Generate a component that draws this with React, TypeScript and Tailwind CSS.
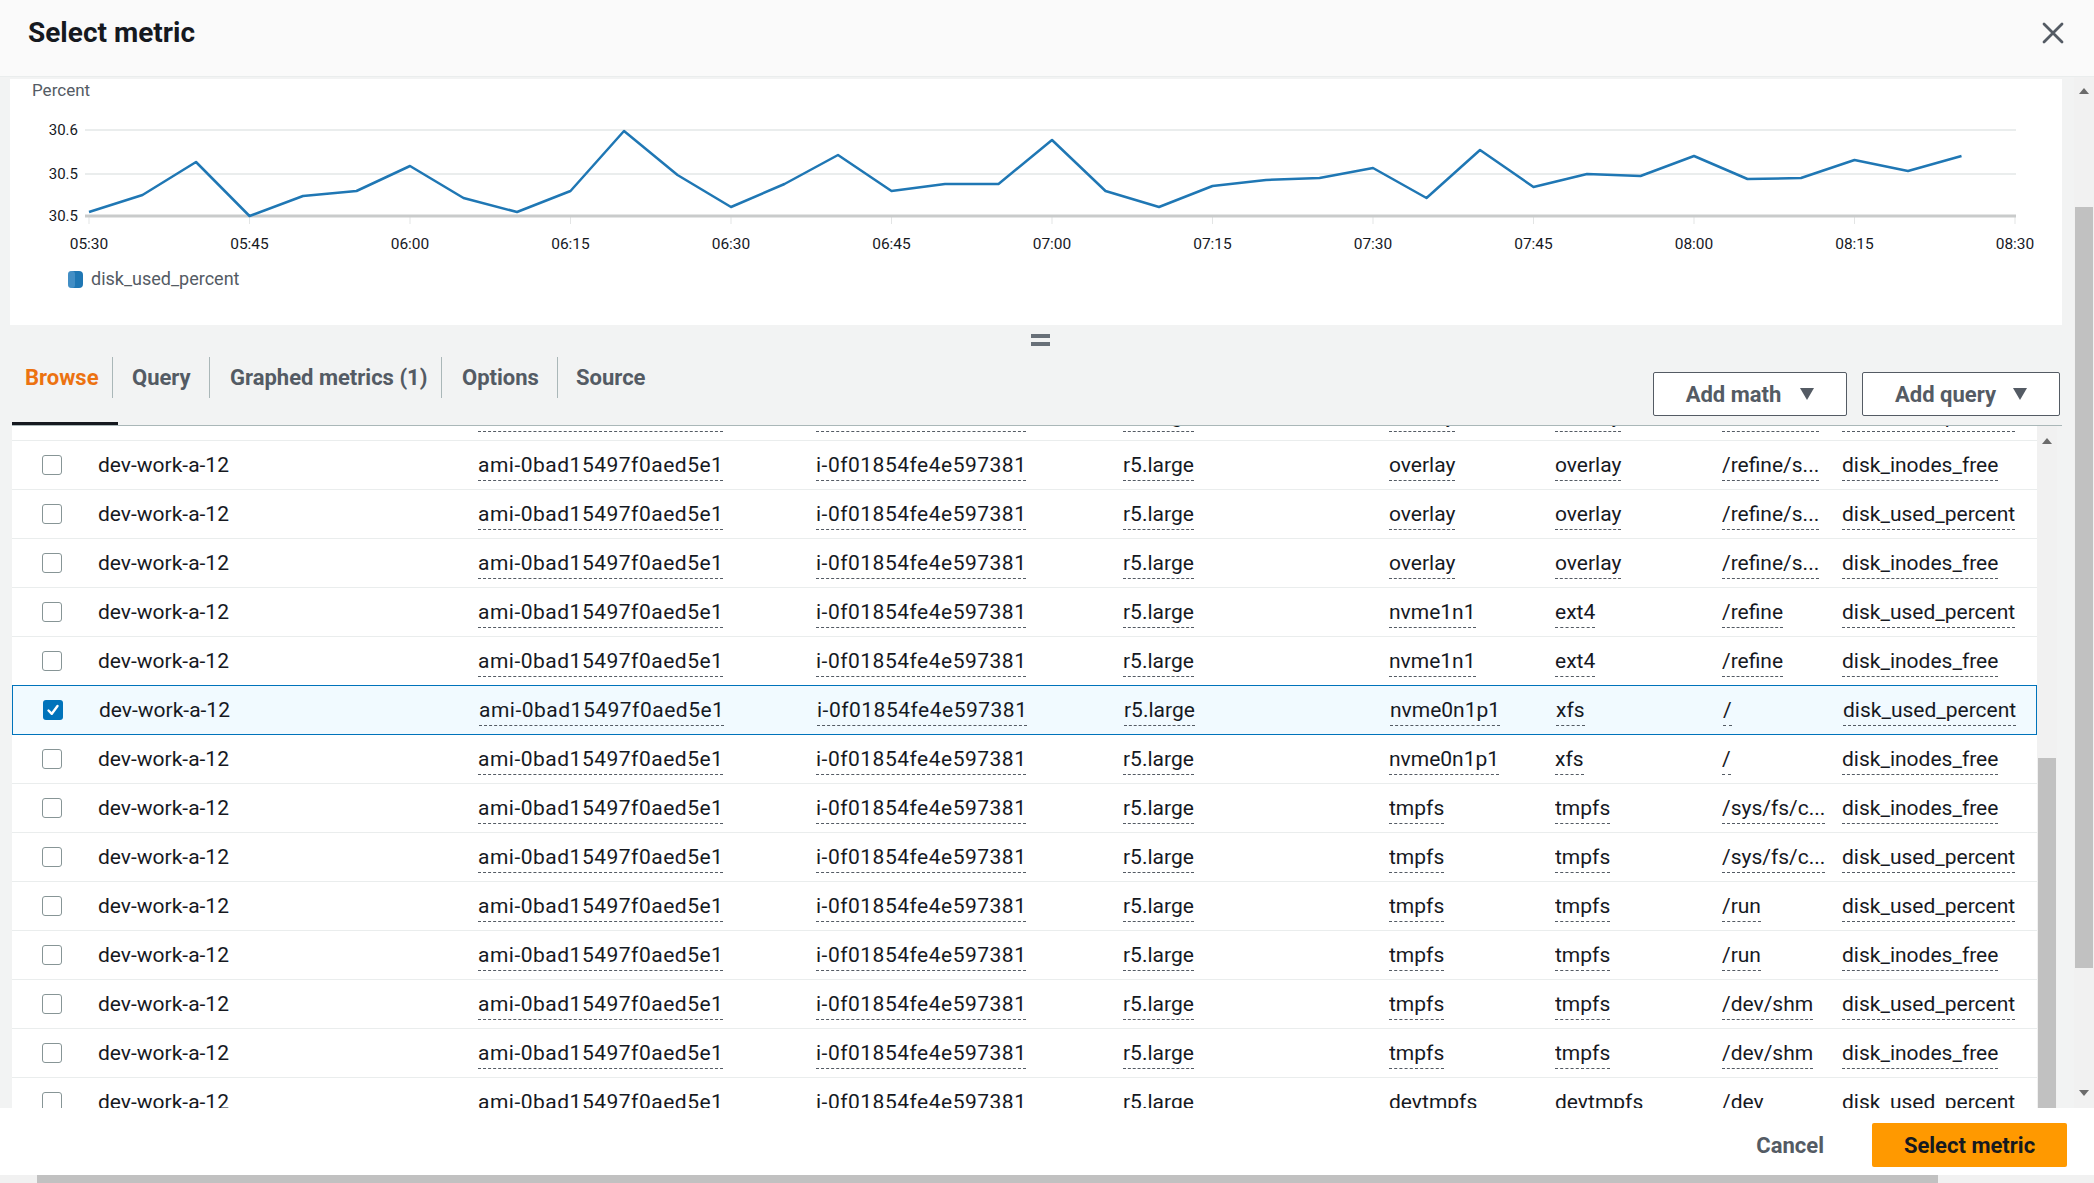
import React from 'react';

type Row = [string, string, string, string];

const ROWS: Row[] = [
  ['overlay', 'overlay', '/refine/s...', 'disk_used_percent'],
  ['overlay', 'overlay', '/refine/s...', 'disk_inodes_free'],
  ['overlay', 'overlay', '/refine/s...', 'disk_used_percent'],
  ['overlay', 'overlay', '/refine/s...', 'disk_inodes_free'],
  ['nvme1n1', 'ext4', '/refine', 'disk_used_percent'],
  ['nvme1n1', 'ext4', '/refine', 'disk_inodes_free'],
  ['nvme0n1p1', 'xfs', '/', 'disk_used_percent'],
  ['nvme0n1p1', 'xfs', '/', 'disk_inodes_free'],
  ['tmpfs', 'tmpfs', '/sys/fs/c...', 'disk_inodes_free'],
  ['tmpfs', 'tmpfs', '/sys/fs/c...', 'disk_used_percent'],
  ['tmpfs', 'tmpfs', '/run', 'disk_used_percent'],
  ['tmpfs', 'tmpfs', '/run', 'disk_inodes_free'],
  ['tmpfs', 'tmpfs', '/dev/shm', 'disk_used_percent'],
  ['tmpfs', 'tmpfs', '/dev/shm', 'disk_inodes_free'],
  ['devtmpfs', 'devtmpfs', '/dev', 'disk_used_percent'],
];

const SELECTED = 6;

// y positions of the datapoints, one every 5 minutes from 05:30
const POINTS = [
  212, 195, 162, 216, 196, 191, 166, 198, 212, 191, 131, 175, 207, 184, 155, 191, 184, 184,
  140, 191, 207, 186, 180, 178, 168, 198, 150, 187, 174, 176, 156, 179, 178, 160, 171, 156,
];

const TICKS = ['05:30', '05:45', '06:00', '06:15', '06:30', '06:45', '07:00', '07:15', '07:30', '07:45', '08:00', '08:15', '08:30'];

const X0 = 89;
const X1 = 2015;
const STEP = (X1 - X0) / 36;

const Chart: React.FC = () => {
  const line = POINTS.map((y, i) => `${(X0 + i * STEP).toFixed(1)},${y}`).join(' ');
  return (
    <svg width={2052} height={246} viewBox="10 79 2052 246" className="block">
      <text x={32} y={96} fontSize={17} fill="#545b64">Percent</text>
      {[
        { y: 130, label: '30.6' },
        { y: 174, label: '30.5' },
        { y: 216, label: '30.5' },
      ].map(g => (
        <text key={g.y} x={78} y={g.y + 5} fontSize={15} fill="#16191f" textAnchor="end">{g.label}</text>
      ))}
      <line x1={85} x2={2016} y1={130} y2={130} stroke="#eaeded" strokeWidth={2} />
      <line x1={85} x2={2016} y1={174} y2={174} stroke="#eaeded" strokeWidth={2} />
      {TICKS.map((t, i) => {
        const x = X0 + i * STEP * 3;
        return (
          <g key={t}>
            <line x1={x} x2={x} y1={217} y2={224} stroke="#e3e5e5" strokeWidth={1} />
            <text x={x} y={249} fontSize={15.5} fill="#16191f" textAnchor="middle">{t}</text>
          </g>
        );
      })}
      <line x1={85} x2={2016} y1={216} y2={216} stroke="#c9cbcb" strokeWidth={3} />
      <polyline points={line} fill="none" stroke="#1f77b4" strokeWidth={2.5} strokeLinejoin="round" />
      <rect x={68} y={271} width={15} height={17} rx={4} fill="#1f77b4" />
      <rect x={68} y={271} width={7} height={17} rx={3} fill="#5a9fd0" opacity={0.6} />
      <text x={91} y={285} fontSize={18} fill="#545b64">disk_used_percent</text>
    </svg>
  );
};

const Caret: React.FC = () => (
  <svg width={14} height={12} viewBox="0 0 14 12" className="shrink-0">
    <polygon points="0,0 14,0 7,12" fill="#545b64" />
  </svg>
);

const Checkbox: React.FC<{ checked?: boolean }> = ({ checked }) =>
  checked ? (
    <div className="w-[20px] h-[20px] rounded-[3px] bg-[#0073bb] flex items-center justify-center">
      <svg width={14} height={14} viewBox="0 0 14 14">
        <path d="M2.5 7.5 L5.8 10.8 L11.5 3" fill="none" stroke="white" strokeWidth={2.4} strokeLinecap="round" strokeLinejoin="round" />
      </svg>
    </div>
  ) : (
    <div className="w-[20px] h-[20px] rounded-[3px] border-[1.5px] border-[#879596] bg-white" />
  );

const Cell: React.FC<{ text: string; dashed?: boolean; wide?: boolean }> = ({ text, dashed = true, wide }) => (
  <div className="flex items-center overflow-hidden whitespace-nowrap">
    <span
      className={`inline-block pt-[4px] pb-[3px] leading-[24px] border-b border-dashed ${dashed ? 'border-[#545b64]' : 'border-transparent'} ${wide ? 'tracking-[0.5px]' : ''}`}
    >
      {text}
    </span>
  </div>
);

const tabs = [
  { label: 'Browse', w: 'w-[101px]', pl: 'pl-[13px]', active: true, divider: true },
  { label: 'Query', w: 'w-[97px]', pl: 'pl-[19px]', divider: true },
  { label: 'Graphed metrics (1)', w: 'w-[232px]', pl: 'pl-[20px]', divider: true },
  { label: 'Options', w: 'w-[116px]', pl: 'pl-[20px]', divider: true },
  { label: 'Source', w: 'w-[110px]', pl: 'pl-[18px]', divider: false },
];

export default function App() {
  return (
    <div className="w-[2094px] h-[1183px] overflow-hidden flex flex-col bg-white font-['Roboto','Liberation_Sans',sans-serif] text-[#16191f]">
      {/* Header */}
      <div className="h-[77px] shrink-0 bg-[#fafafa] border-b border-[#eaeded] flex items-center justify-between pl-[28px] pr-[30px] pb-[10px]">
        <h2 className="text-[28px] font-bold leading-none text-[#16191f]">Select metric</h2>
        <svg width={22} height={22} viewBox="0 0 22 22">
          <path d="M2 2 L20 20 M20 2 L2 20" stroke="#545b64" strokeWidth={2.8} strokeLinecap="round" />
        </svg>
      </div>

      {/* Body */}
      <div className="h-[1031px] shrink-0 flex">
        <div className="w-[2074px] bg-[#f2f3f3] flex flex-col">
          <div className="mt-[2px] ml-[10px] w-[2052px] h-[246px] bg-white">
            <Chart />
          </div>

          {/* drag handle */}
          <div className="pt-[8px] h-[21px] flex justify-center pl-[6px]">
            <div className="flex flex-col gap-[4px] pt-[1px]">
              <div className="w-[19px] h-[4px] bg-[#687078]" />
              <div className="w-[19px] h-[4px] bg-[#687078]" />
            </div>
          </div>

          {/* Tabs */}
          <div className="ml-[12px] w-[2050px] h-[80px] border-b border-[#aab7b8] flex justify-between">
            <div className="flex flex-col">
              <div className="mt-[11px] h-[41px] flex">
                {tabs.map(t => (
                  <div
                    key={t.label}
                    className={`${t.w} ${t.pl} h-full flex items-center text-[22px] font-bold whitespace-nowrap ${t.divider ? 'border-r border-[#aab7b8]' : ''} ${t.active ? 'text-[#ec7211]' : 'text-[#545b64]'}`}
                  >
                    {t.label}
                  </div>
                ))}
              </div>
              <div className="flex-1" />
              <div className="w-[106px] h-[3px] bg-[#16191f]" />
            </div>
            <div className="self-end mb-[9px] flex gap-[15px] mr-[2px]">
              <button className="w-[194px] h-[44px] bg-white border border-[#545b64] rounded-[2px] flex items-center justify-center gap-[19px] text-[22px] font-bold text-[#545b64]">
                <span>Add math</span>
                <Caret />
              </button>
              <button className="w-[198px] h-[44px] bg-white border border-[#545b64] rounded-[2px] flex items-center justify-center gap-[17px] text-[22px] font-bold text-[#545b64]">
                <span>Add query</span>
                <Caret />
              </button>
            </div>
          </div>

          {/* Table */}
          <div className="ml-[12px] flex h-[682px]">
            <div className="w-[2025px] h-full bg-white overflow-hidden">
              <div className="-mt-[34px]">
                {ROWS.map((r, i) => {
                  const sel = i === SELECTED;
                  const before = i === SELECTED - 1;
                  return (
                    <div
                      key={i}
                      className={`h-[49px] grid grid-cols-[86px_380px_338px_307px_266px_166px_167px_120px_195px] text-[21px] border-b ${
                        sel ? 'bg-[#f1faff] border-[#0073bb] border-x' : before ? 'border-[#0073bb]' : 'border-[#eaeded]'
                      }`}
                    >
                      <div className="flex items-center pl-[30px]">
                        <Checkbox checked={sel} />
                      </div>
                      <Cell text="dev-work-a-12" dashed={false} />
                      <Cell text="ami-0bad15497f0aed5e1" wide />
                      <Cell text="i-0f01854fe4e597381" wide />
                      <Cell text="r5.large" />
                      <Cell text={r[0]} />
                      <Cell text={r[1]} />
                      <Cell text={r[2]} />
                      <Cell text={r[3]} />
                    </div>
                  );
                })}
              </div>
            </div>
            {/* inner scrollbar */}
            <div className="w-[20px] h-full bg-[#f1f1f1] flex flex-col items-center">
              <svg width={10} height={6} viewBox="0 0 10 6" className="mt-[12px]">
                <polygon points="0,6 10,6 5,0" fill="#6b6b6b" />
              </svg>
              <div className="flex-1" />
              <div className="w-[18px] h-[350px] bg-[#c1c1c1]" />
            </div>
          </div>
        </div>

        {/* outer scrollbar */}
        <div className="w-[20px] bg-[#f1f1f1] flex flex-col items-center">
          <svg width={10} height={6} viewBox="0 0 10 6" className="mt-[11px]">
            <polygon points="0,6 10,6 5,0" fill="#6b6b6b" />
          </svg>
          <div className="mt-[113px] w-[18px] h-[761px] bg-[#c1c1c1]" />
          <div className="flex-1" />
          <svg width={10} height={6} viewBox="0 0 10 6" className="mb-[12px]">
            <polygon points="0,0 10,0 5,6" fill="#6b6b6b" />
          </svg>
        </div>
      </div>

      {/* Footer */}
      <div className="h-[67px] shrink-0 pt-[7px] pr-[27px] flex items-center justify-end gap-[48px] bg-white">
        <span className="text-[22px] font-bold text-[#545b64]">Cancel</span>
        <button className="w-[195px] h-[44px] rounded-[2px] bg-[#ff9900] text-[22px] font-bold text-[#16191f]">Select metric</button>
      </div>

      {/* horizontal scrollbar */}
      <div className="h-[8px] shrink-0 bg-[#f1f1f1] flex">
        <div className="ml-[37px] w-[1901px] h-full bg-[#c1c1c1]" />
      </div>
    </div>
  );
}
